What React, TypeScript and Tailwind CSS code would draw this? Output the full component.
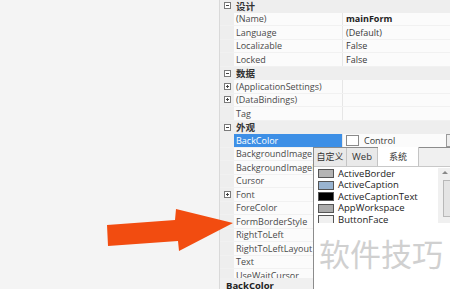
import React from "react";

type Row = {
  cat?: string;
  name?: string;
  value?: string;
  bold?: boolean;
  plus?: boolean;
  selected?: boolean;
};

const rows: Row[] = [
  { cat: "设计" },
  { name: "(Name)", value: "mainForm", bold: true },
  { name: "Language", value: "(Default)" },
  { name: "Localizable", value: "False" },
  { name: "Locked", value: "False" },
  { cat: "数据" },
  { name: "(ApplicationSettings)", plus: true },
  { name: "(DataBindings)", plus: true },
  { name: "Tag" },
  { cat: "外观" },
  { name: "BackColor", selected: true },
  { name: "BackgroundImage" },
  { name: "BackgroundImageLayout" },
  { name: "Cursor" },
  { name: "Font", plus: true },
  { name: "ForeColor" },
  { name: "FormBorderStyle" },
  { name: "RightToLeft" },
  { name: "RightToLeftLayout" },
  { name: "Text" },
  { name: "UseWaitCursor" },
];

const colors = [
  { name: "ActiveBorder", swatch: "bg-[#b4b4b4]" },
  { name: "ActiveCaption", swatch: "bg-[#99b4d1]" },
  { name: "ActiveCaptionText", swatch: "bg-[#000000]" },
  { name: "AppWorkspace", swatch: "bg-[#ababab]" },
  { name: "ButtonFace", swatch: "bg-[#f0f0f0]" },
];

const Glyph = ({ plus }: { plus?: boolean }) => (
  <div className="relative h-[7px] w-[7px] border border-[#7a7a7a] bg-white">
    <div className="absolute left-[1px] top-[2px] h-px w-[3px] bg-[#444]" />
    {plus && <div className="absolute left-[2px] top-[1px] h-[3px] w-px bg-[#444]" />}
  </div>
);

const GridRow = ({ row }: { row: Row }) => {
  if (row.cat) {
    return (
      <div className="flex h-[13.5px] items-center bg-[#eeeeee]">
        <div className="flex w-[14px] shrink-0 justify-center pl-[1px]">
          <Glyph />
        </div>
        <span className="pl-[2px] text-[9.5px] font-bold text-[#333] [font-family:'Noto_Sans_CJK_SC',sans-serif]">
          {row.cat}
        </span>
      </div>
    );
  }
  return (
    <div className="flex h-[13.5px] items-stretch border-b border-[#f1f1f1]">
      <div className="flex w-[14px] shrink-0 items-center justify-center bg-[#eeeeee] pl-[1px]">
        {row.plus && <Glyph plus />}
      </div>
      <div
        className={`flex w-[108px] shrink-0 items-center whitespace-nowrap pl-[2px] ${
          row.selected ? "bg-[#3d8fe6] text-white" : "text-[#4a4a4a]"
        }`}
      >
        {row.name}
      </div>
      <div className="w-px shrink-0 bg-[#e6e6e6]" />
      <div className="flex flex-1 items-center whitespace-nowrap pl-[3px] text-[#383838]">
        {row.selected ? (
          <>
            <div className="h-[11px] w-[13px] border border-[#8a8a8a] bg-white" />
            <span className="ml-[5px]">Control</span>
          </>
        ) : (
          <span className={row.bold ? "font-bold text-[#222]" : ""}>{row.value}</span>
        )}
      </div>
    </div>
  );
};

export default function App() {
  return (
    <div className="relative flex h-[289px] w-[450px] overflow-hidden bg-[#f3f3f3] text-[9px] [font-family:'Open_Sans',sans-serif]">
      <div className="w-[219px] shrink-0 bg-[#f4f4f4]" />
      <div className="w-[1px] shrink-0 bg-[#d9d9d9]" />
      <div className="flex min-w-0 flex-1 flex-col bg-[#fbfbfb]">
        <div className="h-[278px] shrink-0 overflow-hidden">
          <div className="-mt-px">
            {rows.map((r, i) => (
              <GridRow key={i} row={r} />
            ))}
          </div>
        </div>
        <div className="h-px bg-[#d4d4d4]" />
        <div className="flex-1 bg-[#f0f0f0] pl-[6px] pt-px text-[9.5px] font-bold text-[#222]">BackColor</div>
      </div>

      {/* dropdown button of BackColor value */}
      <div className="absolute left-[446px] top-[134px] h-[13px] w-[10px] border border-[#9a9a9a] bg-[#eeeeee]" />

      {/* colour picker popup */}
      <div className="absolute left-[313px] top-[147px] flex h-[142px] w-[140px] flex-col border-l border-t border-[#8c8c8c] bg-white">
        <div className="flex h-[19px] shrink-0 items-end border-b border-[#c8c8c8] bg-[#f0f0f0]">
          <div className="flex h-[18px] w-[33px] items-center justify-center border-r border-[#c4c4c4] bg-[#e9e9e9] text-[#333] [font-family:'Noto_Sans_CJK_SC',sans-serif]">
            自定义
          </div>
          <div className="flex h-[18px] w-[31px] items-center justify-center border-r border-[#c4c4c4] bg-[#e9e9e9] text-[9.5px] text-[#333]">
            Web
          </div>
          <div className="flex h-[19px] w-[41px] items-center justify-center border-r border-[#c4c4c4] bg-white text-[#333] [font-family:'Noto_Sans_CJK_SC',sans-serif]">
            系统
          </div>
        </div>
        <div className="relative h-[56px] shrink-0 overflow-hidden pl-[4px] pt-[1px]">
          {colors.map((c) => (
            <div key={c.name} className="flex h-[11.5px] items-center gap-[4px] whitespace-nowrap text-[9.5px] text-[#222]">
              <div className={`h-[9px] w-[16px] border border-[#555] ${c.swatch}`} />
              <span>{c.name}</span>
            </div>
          ))}
          <div className="absolute left-[124px] top-[1px] flex h-[60px] w-[14px] flex-col items-center bg-[#f0f0f0]">
            <div className="mt-[3px] h-0 w-0 border-x-[3px] border-b-[3px] border-x-transparent border-b-[#888]" />
            <div className="ml-[5px] mt-[6px] h-[37px] w-[9px] border border-[#b8b8b8] bg-[#e4e4e4]" />
          </div>
        </div>
        <div className="flex-1 bg-white" />
      </div>

      {/* watermark */}
      <div className="pointer-events-none absolute left-[319px] top-[237px] text-[31px] leading-none text-[#d0d0d0] [font-family:'Noto_Sans_CJK_SC',sans-serif]">
        软件技巧
      </div>

      {/* arrow */}
      <svg className="pointer-events-none absolute inset-0" width="450" height="289" viewBox="0 0 450 289">
        <polygon
          points="107,225 175,220 176,209 233,223 179,251 178,241 108,246"
          fill="#f24c10"
        />
      </svg>
    </div>
  );
}
